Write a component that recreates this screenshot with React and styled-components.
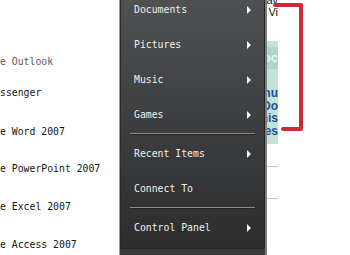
import React from "react";
import styled, { createGlobalStyle } from "styled-components";

const GlobalStyle = createGlobalStyle`
  html, body {
    margin: 0;
    padding: 0;
    background: #ffffff;
    overflow: hidden;
  }
  #root {
    width: 350px;
    height: 255px;
  }
`;

const leftItems = [
  { label: "e Outlook", top: 56, muted: true },
  { label: "ssenger", top: 19 },
  { label: "e Word 2007", top: 27 },
  { label: "e PowerPoint 2007", top: 25 },
  { label: "e Excel 2007", top: 26 },
  { label: "e Access 2007", top: 26 },
];

const menuItems = [
  { label: "Documents", arrow: true },
  { label: "Pictures", arrow: true },
  { label: "Music", arrow: true },
  { label: "Games", arrow: true },
  { sep: true },
  { label: "Recent Items", arrow: true },
  { label: "Connect To" },
  { sep: true },
  { label: "Control Panel", arrow: true },
];

export default function App() {
  return (
    <Page>
      <GlobalStyle />
      <LeftCol>
        {leftItems.map((item) => (
          <LeftRow key={item.label} top={item.top} muted={item.muted}>
            {item.label}
          </LeftRow>
        ))}
      </LeftCol>

      <Menu>
        <MenuList>
          {menuItems.map((item, i) =>
            item.sep ? (
              <Separator key={i} />
            ) : (
              <MenuItem key={item.label}>
                <span>{item.label}</span>
                {item.arrow && <Arrow />}
              </MenuItem>
            )
          )}
        </MenuList>
        <MenuFooter />
      </Menu>

      <RightCol>
        <Strip>
          <StripText top={-5}>Fav</StripText>
          <StripText top={1}>Vi</StripText>
          <TealBox>
            <TealHead>Doc</TealHead>
            <BlueText>Menu</BlueText>
            <BlueText>Do</BlueText>
            <BlueText>his</BlueText>
            <BlueText>ites</BlueText>
          </TealBox>
          <Rule top={22} />
          <Rule top={31} />
        </Strip>
        <Bracket width="32" height="134" viewBox="0 0 32 134">
          <path
            d="M2 4 H28 V128 H10"
            fill="none"
            stroke="#cc2a36"
            strokeWidth="4"
            strokeLinejoin="round"
            strokeLinecap="round"
          />
        </Bracket>
      </RightCol>
    </Page>
  );
}

const Page = styled.div`
  display: flex;
  width: 350px;
  height: 255px;
  overflow: hidden;
  background: #fff;
`;

const LeftCol = styled.div`
  width: 119px;
  flex-shrink: 0;
  display: flex;
  flex-direction: column;
  overflow: hidden;
  font-family: "DejaVu Sans Mono", "Liberation Mono", monospace;
  font-size: 9.8px;
`;

const LeftRow = styled.div`
  margin-top: ${({ top }) => top}px;
  height: 12px;
  line-height: 12px;
  white-space: nowrap;
  color: ${({ muted }) => (muted ? "#5a5a5a" : "#141414")};
`;

const Menu = styled.div`
  width: 145px;
  flex-shrink: 0;
  display: flex;
  flex-direction: column;
  border-left: 1px solid #9a9a9a;
  border-right: 2px solid #7c7e80;
  background: linear-gradient(#4e5051 0%, #3f4142 40%, #333435 75%, #2c2c2c 100%);
  box-shadow: inset 1px 0 0 #2a2a2a, inset -1px 0 0 #222;
`;

const MenuList = styled.div`
  flex: 1;
  display: flex;
  flex-direction: column;
  margin-top: -8px;
  padding: 0 14px;
`;

const MenuItem = styled.div`
  height: 35px;
  display: flex;
  align-items: center;
  justify-content: space-between;
  font-family: "DejaVu Sans Mono", "Liberation Mono", monospace;
  font-size: 9.8px;
  color: #f0f0f0;
  white-space: nowrap;
`;

const Arrow = styled.span`
  width: 0;
  height: 0;
  border-top: 4px solid transparent;
  border-bottom: 4px solid transparent;
  border-left: 4px solid #f4f4f4;
`;

const Separator = styled.div`
  height: 1px;
  margin: 1px -4px;
  background: #8c8c8c;
  border-bottom: 1px solid #242424;
`;

const MenuFooter = styled.div`
  height: 6px;
  background: #3a3b3b;
  border-top: 1px solid #262626;
`;

const RightCol = styled.div`
  flex: 1;
  position: relative;
  background: #fff;
`;

const Strip = styled.div`
  width: 11px;
  height: 100%;
  display: flex;
  flex-direction: column;
  overflow: hidden;
  font-family: "Liberation Sans", Arial, sans-serif;
`;

const StripText = styled.div`
  display: flex;
  justify-content: flex-end;
  white-space: nowrap;
  font-size: 11px;
  line-height: 11px;
  color: #111;
  margin-top: ${({ top }) => top}px;
`;

const TealBox = styled.div`
  margin-top: 23px;
  height: 103px;
  background: #c3e2da;
  display: flex;
  flex-direction: column;
  align-items: flex-end;
  overflow: hidden;
`;

const TealHead = styled.div`
  width: 100%;
  height: 22px;
  margin-top: 6px;
  margin-bottom: 18px;
  background: #aed6cd;
  color: #e8f4f1;
  font-size: 13px;
  font-weight: bold;
  line-height: 22px;
  display: flex;
  justify-content: flex-end;
  white-space: nowrap;
`;

const BlueText = styled.div`
  font-size: 12px;
  font-weight: bold;
  line-height: 12.5px;
  color: #1b4f9e;
  white-space: nowrap;
`;

const Rule = styled.div`
  margin-top: ${({ top }) => top}px;
  height: 1px;
  background: #c8c8c8;
`;

const Bracket = styled.svg`
  position: absolute;
  left: 6px;
  top: 1px;
`;
